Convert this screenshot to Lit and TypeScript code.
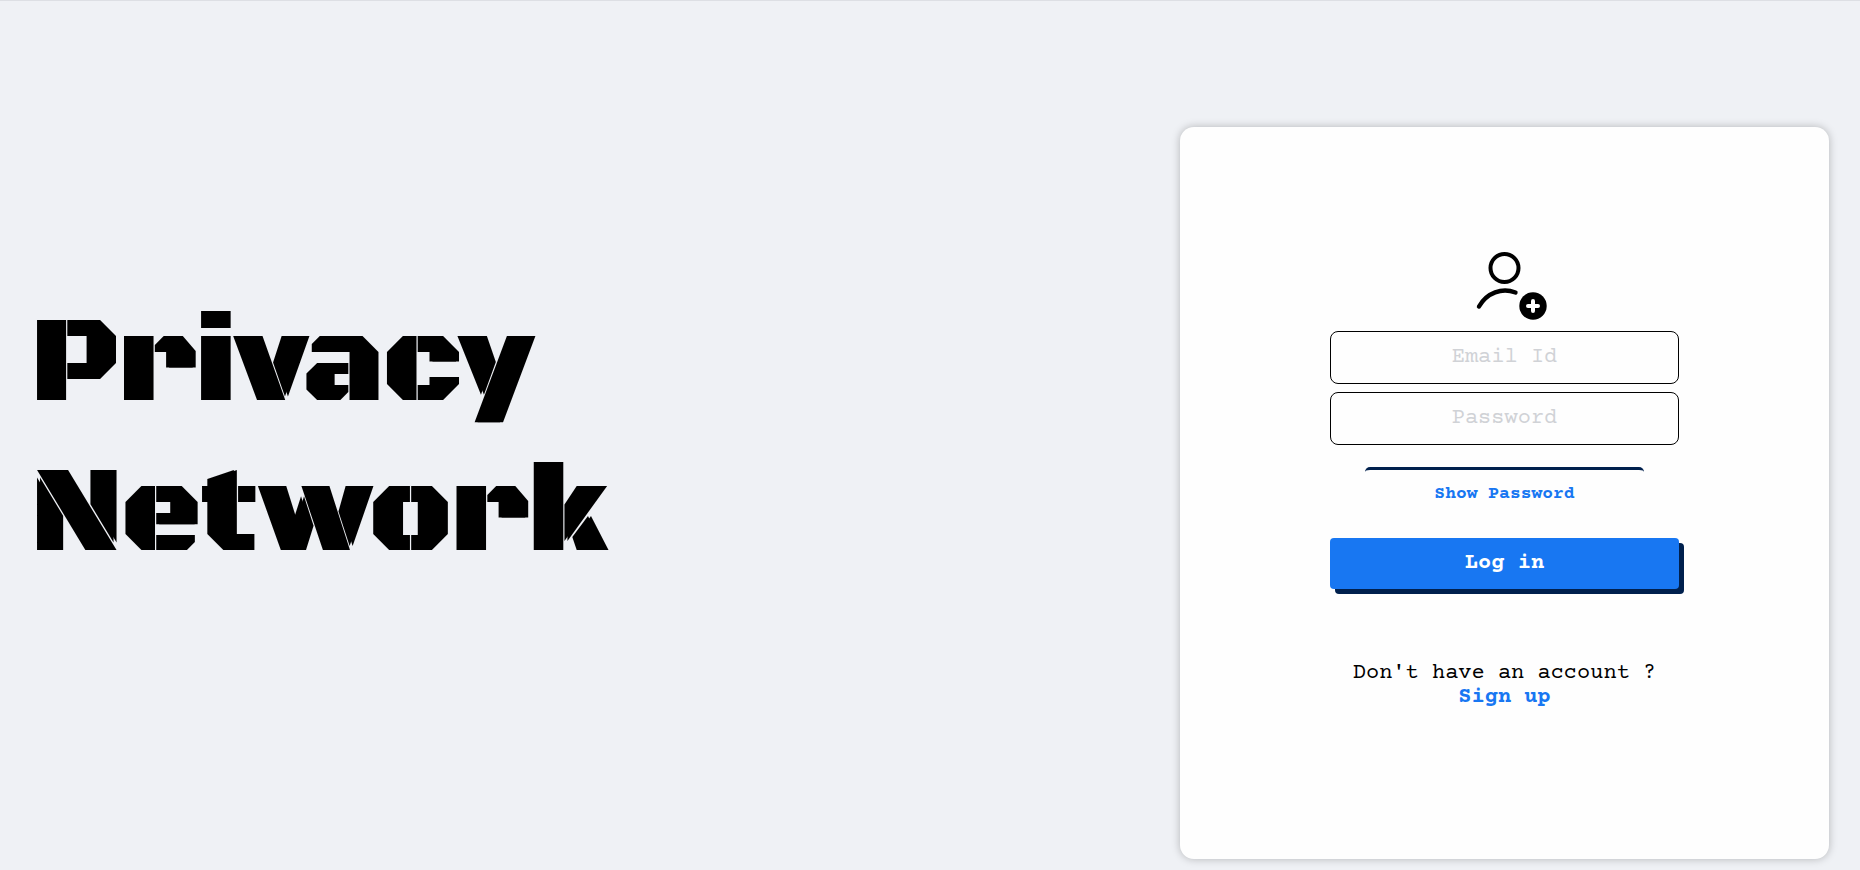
import { LitElement, html, css } from "lit";
import { customElement, state } from "lit/decorators.js";

@customElement("app-root")
export class AppRoot extends LitElement {
  @state() private showPassword = false;

  static styles = css`
    :host {
      display: block;
      box-sizing: border-box;
      min-height: 100vh;
      background: #eff1f5;
      border-top: 1px solid #dddfe4;
      color: #000;
      font-family: "Courier Prime", "Courier New", "Liberation Mono", monospace;
      font-size: 22px;
      line-height: 24px;
    }
    * {
      box-sizing: border-box;
    }
    .page {
      display: grid;
      grid-template-columns: 20fr 11fr;
      align-items: center;
      padding: 126px 31px 10px 0;
    }
    .brand {
      margin: 0;
      padding: 0 30px 107px;
      font-family: "Black Ops One", Inter, sans-serif;
      font-weight: 400;
      font-size: 123px;
      line-height: 150px;
      text-shadow: 3px 0 0 #000;
    }
    .brand span {
      display: block;
    }
    .card {
      display: flex;
      flex-direction: column;
      align-items: center;
      padding: 123px 150px 149px;
      background: #fefefe;
      border-radius: 14px;
      box-shadow: 0 0 8px rgba(0, 0, 0, 0.25);
    }
    .avatar {
      display: block;
      width: 80px;
      height: 80px;
      margin-bottom: 1px;
      overflow: visible;
    }
    .field {
      width: 100%;
      height: 53px;
      margin: 0 0 8px;
      padding: 0 8px;
      border: 1px solid #000;
      border-radius: 8px;
      background: transparent;
      color: #000;
      font: inherit;
      text-align: center;
    }
    .field::placeholder {
      color: #d0d2d6;
      opacity: 1;
    }
    .toggle {
      width: 80%;
      height: 48px;
      margin: 14px 0 23px;
      padding: 2px 0 0;
      border: 0;
      border-top: 3px solid #00204d;
      border-radius: 5px;
      background: transparent;
      color: #1877f2;
      font: inherit;
      font-size: 18px;
      font-weight: 700;
    }
    .login {
      width: 100%;
      height: 51px;
      padding: 0;
      border: 0;
      border-radius: 4px;
      background: #1877f2;
      box-shadow: 5px 5px 0 #00204d;
      color: #fff;
      font: inherit;
      font-weight: 700;
    }
    .signup {
      margin: 73px 0 0;
      text-align: center;
      white-space: nowrap;
    }
    .signup a {
      display: block;
      color: #1877f2;
      font-weight: 700;
      text-decoration: none;
    }
    form {
      width: 100%;
      display: flex;
      flex-direction: column;
      align-items: center;
    }
  `;

  private toggle() {
    this.showPassword = !this.showPassword;
  }

  render() {
    return html`
      <main class="page">
        <h1 class="brand"><span>Privacy</span><span>Network</span></h1>
        <section class="card">
          <svg class="avatar" viewBox="0 0 80 80" fill="none" aria-hidden="true">
            <circle cx="39.5" cy="18" r="14" stroke="#000" stroke-width="4" />
            <path d="M14 56.5C22 42.5 37 37.5 50.5 42.5" stroke="#000" stroke-width="4.4" stroke-linecap="round" />
            <circle cx="68" cy="56" r="13.7" fill="#000" />
            <path d="M68 51V61M63 56H73" stroke="#fff" stroke-width="4" stroke-linecap="round" />
          </svg>
          <form @submit=${(e: Event) => e.preventDefault()}>
            <input class="field" type="email" placeholder="Email Id" aria-label="Email Id" />
            <input
              class="field"
              type=${this.showPassword ? "text" : "password"}
              placeholder="Password"
              aria-label="Password"
            />
            <button class="toggle" type="button" @click=${this.toggle}>Show Password</button>
            <button class="login" type="submit">Log in</button>
          </form>
          <p class="signup">Don't have an account ?<a href="#signup">Sign up</a></p>
        </section>
      </main>
    `;
  }
}
